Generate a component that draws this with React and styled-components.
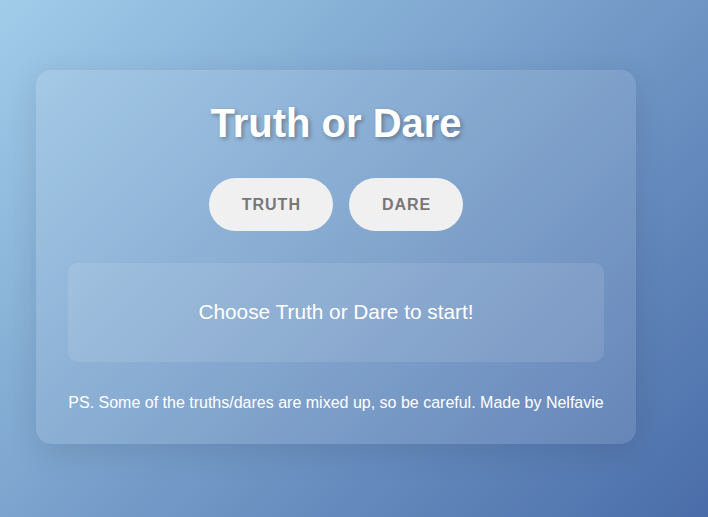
import React from "react";
import styled, { createGlobalStyle } from "styled-components";

const GlobalStyle = createGlobalStyle`
  html, body {
    margin: 0;
    padding: 0;
  }
  body {
    font-family: "Liberation Sans", Arial, sans-serif;
    background: linear-gradient(135deg, #a1cce9 0%, #4a6da9 100%);
    min-height: 100vh;
  }
`;

const Page = styled.div`
  min-height: 100vh;
  display: flex;
  align-items: center;
  padding-left: 36px;
  box-sizing: border-box;
`;

const Card = styled.div`
  width: 600px;
  box-sizing: border-box;
  padding: 31px 32px 32px;
  background: rgba(255, 255, 255, 0.1);
  border-radius: 15px;
  box-shadow: 0 8px 32px rgba(0, 0, 0, 0.1);
  text-align: center;
  color: #fff;
  margin-top: -4px;
`;

const Title = styled.h1`
  margin: 0 0 32px;
  font-size: 40px;
  font-weight: 700;
  color: #fff;
  text-shadow: 2px 2px 4px rgba(0, 0, 0, 0.3);
`;

const Buttons = styled.div`
  display: flex;
  justify-content: center;
  gap: 16px;
  margin-bottom: 32px;
`;

const Button = styled.button`
  font-family: inherit;
  font-size: 16px;
  font-weight: 700;
  letter-spacing: 1px;
  line-height: 21px;
  padding: 16px 32px 16px 33px;
  border: none;
  border-radius: 30px;
  background: #f0f0f0;
  color: #777;
  cursor: pointer;
`;

const Result = styled.div`
  height: 99px;
  display: flex;
  align-items: center;
  justify-content: center;
  background: rgba(255, 255, 255, 0.1);
  border-radius: 10px;
  font-size: 20.8px;
  color: #fff;
  margin-bottom: 32px;
`;

const Note = styled.p`
  margin: 0;
  font-size: 16px;
  line-height: 18px;
  color: #fff;
`;

export default function App() {
  return (
    <>
      <GlobalStyle />
      <Page>
        <Card>
          <Title>Truth or Dare</Title>
          <Buttons>
            <Button>TRUTH</Button>
            <Button>DARE</Button>
          </Buttons>
          <Result>Choose Truth or Dare to start!</Result>
          <Note>
            PS. Some of the truths/dares are mixed up, so be careful. Made by Nelfavie
          </Note>
        </Card>
      </Page>
    </>
  );
}
